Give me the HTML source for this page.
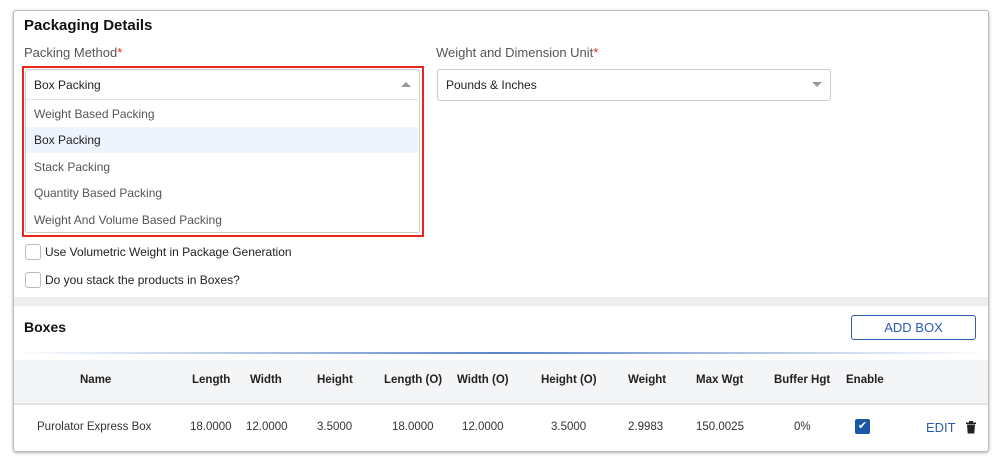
<!DOCTYPE html><html><head><style>
body{margin:0;width:1000px;height:460px;background:#fff;font-family:"Liberation Sans",sans-serif;position:relative;overflow:hidden}
.a{position:absolute}
.card{left:13px;top:10px;width:974px;height:440px;border:1px solid #bbb;border-radius:3px;box-shadow:0 1px 3px rgba(0,0,0,.3);overflow:hidden;background:#fff}
.t{font-size:12px;color:#222;white-space:nowrap}
.g{color:#555}
.cb{width:14px;height:14px;border:1px solid #bbb;border-radius:3px}
</style></head><body>
<div class="a card">
<div class="a" style="left:0;top:286px;width:974px;height:9px;background:#eee"></div>
<div class="a" style="left:0;top:341px;width:974px;height:2px;background:linear-gradient(90deg,#fff,#5a86c6 50%,#fff)"></div>
<div class="a" style="left:0;top:349px;width:974px;height:43px;background:#f4f5f7;border-bottom:2px solid #e4e4e4"></div>
</div>
<div class="a t" style="left:24px;top:17px;font-size:15px;font-weight:bold;color:#111">Packaging Details</div>
<div class="a t g" style="left:24px;top:45px;font-size:13px">Packing Method<span style="color:#e22">*</span></div>
<div class="a t g" style="left:436px;top:45px;font-size:13px">Weight and Dimension Unit<span style="color:#e22">*</span></div>
<div class="a" style="left:22px;top:66px;width:398px;height:167px;border:2px solid #e8261d"></div>
<div class="a" style="left:25px;top:69px;width:393px;height:162px;border:1px solid #ccc;border-radius:3px;background:#fff"></div>
<div class="a" style="left:26px;top:99px;width:392px;height:1px;background:#e4e4e4"></div>
<div class="a" style="left:26px;top:127px;width:392px;height:26px;background:#eef4fd"></div>
<div class="a t" style="left:34px;top:78px">Box Packing</div>
<div class="a" style="left:401px;top:82px;width:0;height:0;border-left:5px solid transparent;border-right:5px solid transparent;border-bottom:5px solid #999"></div>
<div class="a t g" style="left:34px;top:107px">Weight Based Packing</div>
<div class="a t" style="left:34px;top:133px">Box Packing</div>
<div class="a t g" style="left:34px;top:160px">Stack Packing</div>
<div class="a t g" style="left:34px;top:186px">Quantity Based Packing</div>
<div class="a t g" style="left:34px;top:213px">Weight And Volume Based Packing</div>
<div class="a" style="left:437px;top:69px;width:392px;height:30px;border:1px solid #ccc;border-radius:3px"></div>
<div class="a t" style="left:446px;top:78px">Pounds &amp; Inches</div>
<div class="a" style="left:812px;top:82px;border-left:5px solid transparent;border-right:5px solid transparent;border-top:5px solid #999"></div>
<div class="a cb" style="left:25px;top:244px"></div><div class="a t" style="left:45px;top:245px">Use Volumetric Weight in Package Generation</div>
<div class="a cb" style="left:25px;top:272px"></div><div class="a t" style="left:45px;top:273px">Do you stack the products in Boxes?</div>
<div class="a t" style="left:24px;top:319px;font-size:14px;font-weight:bold;color:#111">Boxes</div>
<div class="a" style="left:851px;top:315px;width:123px;height:23px;border:1px solid #2a5db0;border-radius:3px;color:#2a5db0;font-size:13px;text-align:center;line-height:23px">ADD BOX</div>
<div class="a" style="left:0;top:374px;width:1000px;font-size:11.5px;font-weight:bold;color:#222">
<span class="a" style="left:80px">Name</span><span class="a" style="left:192px">Length</span><span class="a" style="left:250px">Width</span><span class="a" style="left:317px">Height</span><span class="a" style="left:384px">Length (O)</span><span class="a" style="left:457px">Width (O)</span><span class="a" style="left:541px">Height (O)</span><span class="a" style="left:628px">Weight</span><span class="a" style="left:696px">Max Wgt</span><span class="a" style="left:774px">Buffer Hgt</span><span class="a" style="left:846px">Enable</span></div>
<div class="a" style="left:0;top:421px;width:1000px;font-size:11.5px;color:#333">
<span class="a" style="left:37px">Purolator Express Box</span><span class="a" style="left:190px">18.0000</span><span class="a" style="left:246px">12.0000</span><span class="a" style="left:317px">3.5000</span><span class="a" style="left:392px">18.0000</span><span class="a" style="left:462px">12.0000</span><span class="a" style="left:551px">3.5000</span><span class="a" style="left:628px">2.9983</span><span class="a" style="left:696px">150.0025</span><span class="a" style="left:794px">0%</span></div>
<div class="a" style="left:855px;top:419px;width:15px;height:15px;background:#1d57a8;border-radius:2px;color:#fff;font-size:11px;line-height:15px;text-align:center">✔</div>
<div class="a" style="left:926px;top:420px;font-size:13px;color:#2a5db0">EDIT</div>
<svg class="a" style="left:966px;top:421px" width="10" height="13" viewBox="0 0 10 13"><rect x="0" y="1.5" width="10" height="1.5" fill="#222"/><rect x="3" y="0" width="4" height="2" fill="#222"/><path d="M1 3.5h8l-.7 9h-6.6z" fill="#222"/></svg>
</body></html>
